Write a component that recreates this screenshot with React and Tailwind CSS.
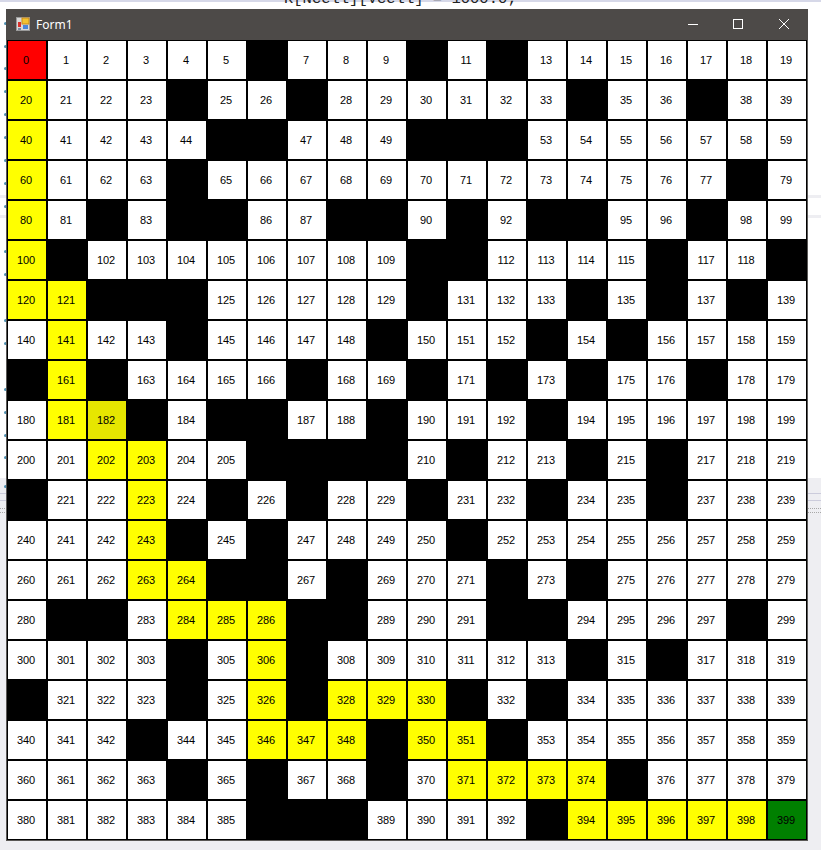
import React from 'react';

const BLOCKED = new Set([
  6, 10, 12, 24, 27, 34, 37, 45, 46, 50, 51, 52, 64, 78, 82, 84, 85, 88, 89, 91, 93, 94, 97,
  101, 110, 111, 116, 119, 122, 123, 124, 130, 134, 136, 138, 144, 149, 153, 155,
  160, 162, 167, 170, 172, 174, 177, 183, 185, 186, 189, 193,
  206, 207, 208, 209, 211, 214, 216, 220, 225, 227, 230, 233, 236, 244, 246, 251,
  265, 266, 268, 272, 274, 281, 282, 287, 288, 292, 293, 298, 304, 307, 314, 316,
  320, 324, 327, 331, 333, 343, 349, 352, 364, 366, 369, 375, 386, 387, 388, 393,
]);

const PATH = new Set([
  20, 40, 60, 80, 100, 120, 121, 141, 161, 181, 202, 203, 223, 243, 263, 264, 284, 285, 286,
  306, 326, 328, 329, 330, 346, 347, 348, 350, 351, 371, 372, 373, 374, 394, 395, 396, 397, 398,
]);

// gaps between the editor's margin markers, first one from the top of the page
const MARKER_GAPS = [22, 20, 19, 20, 20, 20, 20, 20, 20, 42, 20, 43, 20, 43, 20, 20, 19, 26];

const cellColor = (n) => {
  if (n === 0) return 'bg-[#ff0000]';
  if (n === 399) return 'bg-[#008000]';
  if (n === 182) return 'bg-[#e6e600]';
  if (PATH.has(n)) return 'bg-[#ffff00]';
  return 'bg-white';
};

const FormIcon = () => (
  <svg width="16" height="16" viewBox="0 0 16 16" className="shrink-0">
    <rect x="0.5" y="0.5" width="13" height="13" fill="#d8d8d8" stroke="#9a9a9a" />
    <rect x="6" y="1" width="7" height="6" fill="#f2c230" stroke="#c98a1a" />
    <rect x="2" y="5" width="3" height="5" fill="#d9302a" />
    <rect x="7" y="8" width="5" height="4" fill="#4a86d8" />
    <rect x="2" y="11" width="3" height="2" fill="#7a8aa0" />
  </svg>
);

// the code editor that shows around the form window
const Backdrop = () => (
  <div className="absolute inset-0 flex flex-col overflow-hidden">
    <div className="h-[2px] bg-[#d6d8e8]" />
    <div className="h-[193px] pl-[284px]">
      <div className="-mt-[13px] text-[15.5px] leading-[20px] text-[#222222] font-['Liberation_Mono',monospace] whitespace-pre">
        R[Ncell][Vcell] = 1000.0;
      </div>
    </div>
    <div className="h-[3px] bg-[#eeeef2]" />
    <div className="h-[17px]" />
    <div className="h-[3px] bg-[#eeeef2]" />
    <div className="h-[260px]" />
    <div className="flex-1 flex flex-col bg-[#eeeef2] pt-[15px]">
      <div className="h-px bg-[#ccccdc]" />
      <div className="h-px mt-[6px] bg-[#ccccdc]" />
      <div className="h-[5px] mt-[7px] border-y border-dotted border-[#a8a8a8]" />
    </div>
    <div className="absolute inset-y-0 left-[4px] flex flex-col">
      {MARKER_GAPS.map((gap, i) => (
        <div key={i} style={{ marginTop: gap }} className="w-[3px] h-[3px] rounded-full bg-[#4f8fb0]" />
      ))}
    </div>
  </div>
);

const App = () => {
  const cells = Array.from({ length: 400 }, (_, i) => i);

  return (
    <div className="relative w-[821px] h-[850px] overflow-hidden bg-white font-['Liberation_Sans',sans-serif]">
      <Backdrop />
      <div className="relative ml-[6px] pt-[9px] w-[802px]">
        <div className="border-x border-b border-[#5a5856] bg-black">
          <div className="h-[31px] -mx-px pl-[10px] pt-[8px] bg-[#4d4a48] flex items-start text-white">
            <FormIcon />
            <span className="ml-[4px] text-[12px] leading-[16px] font-['Noto_Sans',sans-serif]">Form1</span>
            <div className="ml-auto mt-px flex items-start pr-[18px]">
              <svg width="12" height="12" viewBox="0 0 12 12" className="mr-[33px]">
                <path d="M1 6.5h10" stroke="#ffffff" strokeWidth="1" />
              </svg>
              <svg width="12" height="12" viewBox="0 0 12 12" className="mr-[34px]">
                <rect x="1.5" y="1.5" width="9" height="9" fill="none" stroke="#ffffff" strokeWidth="1" />
              </svg>
              <svg width="12" height="12" viewBox="0 0 12 12">
                <path d="M1 1l10 10M11 1L1 11" stroke="#ffffff" strokeWidth="1" />
              </svg>
            </div>
          </div>
          <div className="grid grid-cols-[repeat(20,38px)] auto-rows-[38px] gap-[2px] p-px bg-black">
            {cells.map((n) =>
              BLOCKED.has(n) ? (
                <div key={n} className="bg-black" />
              ) : (
                <div key={n} className={`flex items-center justify-center pr-[2px] text-[11px] tracking-[-0.2px] text-black ${cellColor(n)}`}>
                  {n}
                </div>
              )
            )}
          </div>
        </div>
      </div>
    </div>
  );
};

export default App;
